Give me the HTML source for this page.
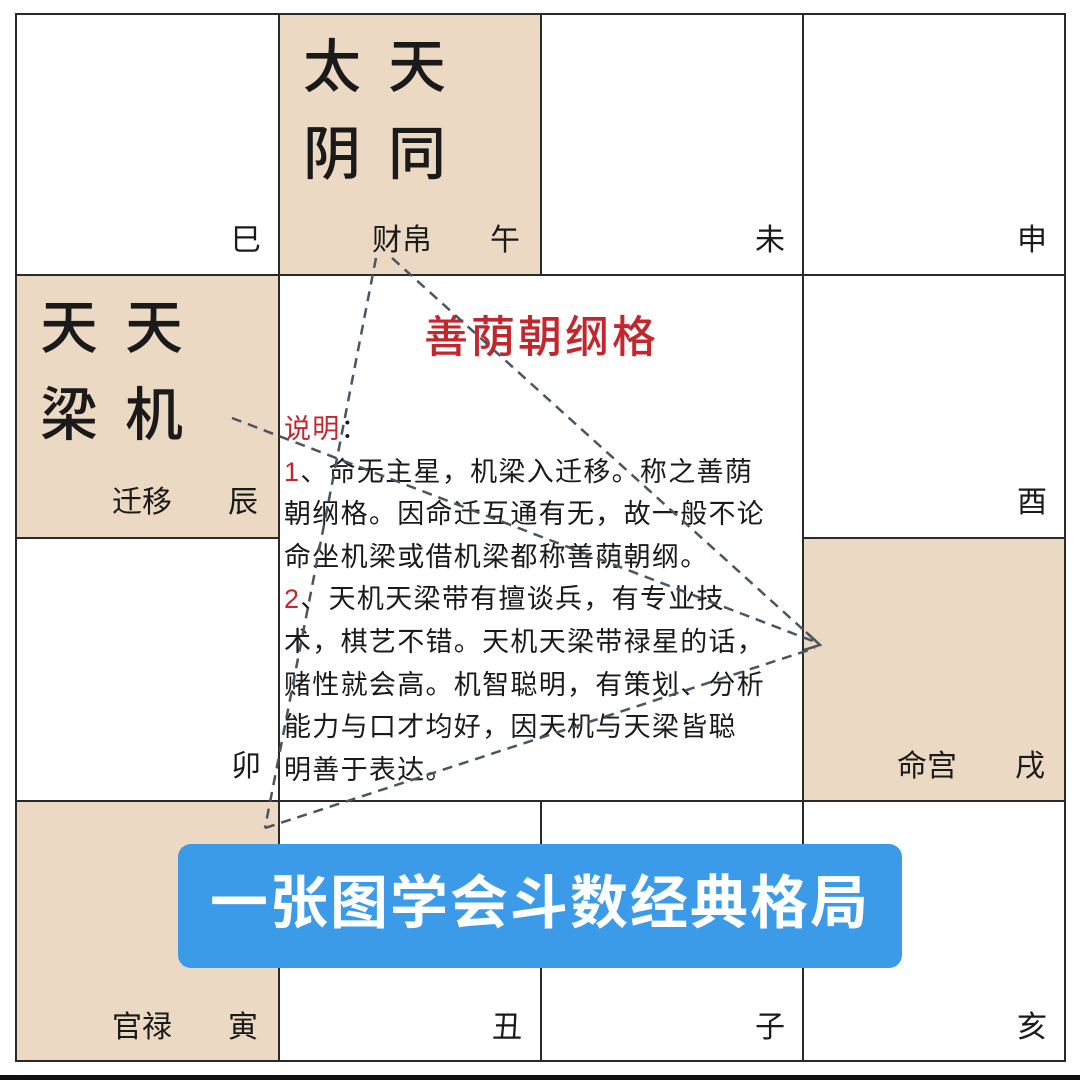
<!DOCTYPE html>
<html><head><meta charset="utf-8"><style>
body{margin:0;width:1080px;height:1080px;background:#fff;position:relative;overflow:hidden;font-family:"Liberation Sans","Noto Sans CJK SC",sans-serif;color:#1a1a1a}
.c{position:absolute;box-sizing:border-box;border:2px solid #2a2a2a}
.b{background:#ecd9c3}
.t{position:absolute;white-space:nowrap;line-height:1}
.big{font-size:58px;letter-spacing:27px;line-height:87px;font-weight:500}
.s{font-size:30px}
#txt{position:absolute;left:284px;top:408px;font-size:27px;letter-spacing:1.3px;line-height:42.6px;white-space:nowrap}
.r{color:#c2272d}
</style></head><body>
<div class="c" style="left:15px;top:13px;width:265px;height:263px"></div>
<div class="c b" style="left:278px;top:13px;width:264px;height:263px"></div>
<div class="c" style="left:540px;top:13px;width:264px;height:263px"></div>
<div class="c" style="left:802px;top:13px;width:264px;height:263px"></div>
<div class="c b" style="left:15px;top:274px;width:265px;height:265px"></div>
<div class="c" style="left:278px;top:274px;width:526px;height:528px"></div>
<div class="c" style="left:802px;top:274px;width:264px;height:265px"></div>
<div class="c" style="left:15px;top:537px;width:265px;height:265px"></div>
<div class="c b" style="left:802px;top:537px;width:264px;height:265px"></div>
<div class="c b" style="left:15px;top:800px;width:265px;height:262px"></div>
<div class="c" style="left:278px;top:800px;width:264px;height:262px"></div>
<div class="c" style="left:540px;top:800px;width:264px;height:262px"></div>
<div class="c" style="left:802px;top:800px;width:264px;height:262px"></div>
<div style="position:absolute;left:0;top:1075px;width:1080px;height:5px;background:#111"></div>

<div class="t big" style="left:303px;top:24px">太天<br>阴同</div>
<div class="t big" style="left:40px;top:285px">天天<br>梁机</div>

<div class="t s" style="left:231px;top:226px">巳</div>
<div class="t s" style="left:372px;top:226px">财帛</div>
<div class="t s" style="left:490px;top:226px">午</div>
<div class="t s" style="left:755px;top:226px">未</div>
<div class="t s" style="left:1017px;top:226px">申</div>
<div class="t s" style="left:112px;top:488px">迁移</div>
<div class="t s" style="left:228px;top:488px">辰</div>
<div class="t s" style="left:1017px;top:488px">酉</div>
<div class="t s" style="left:231px;top:752px">卯</div>
<div class="t s" style="left:897px;top:752px">命宫</div>
<div class="t s" style="left:1015px;top:752px">戌</div>
<div class="t s" style="left:112px;top:1013px">官禄</div>
<div class="t s" style="left:228px;top:1013px">寅</div>
<div class="t s" style="left:492px;top:1013px">丑</div>
<div class="t s" style="left:755px;top:1013px">子</div>
<div class="t s" style="left:1017px;top:1013px">亥</div>

<div class="t r" style="left:424px;top:316px;font-size:44px;letter-spacing:3px;font-weight:500">善荫朝纲格</div>
<div id="txt"><span class="r">说明</span>：<br><span class="r">1</span>、命无主星，机梁入迁移。称之善荫<br>朝纲格。因命迁互通有无，故一般不论<br>命坐机梁或借机梁都称善荫朝纲。<br><span class="r">2</span>、天机天梁带有擅谈兵，有专业技<br>术，棋艺不错。天机天梁带禄星的话，<br>赌性就会高。机智聪明，有策划、分析<br>能力与口才均好，因天机与天梁皆聪<br>明善于表达。</div>

<svg style="position:absolute;left:0;top:0" width="1080" height="1080">
<g stroke="#4a5563" stroke-width="2.5" stroke-dasharray="10,7" fill="none">
<path d="M376 258 L265 828"/>
<path d="M392 258 L818 643"/>
<path d="M232 418 L818 643"/>
<path d="M265 828 L815 648"/>
</g>
<path d="M806 632 L820 645 L804 650" stroke="#4a5563" stroke-width="2.5" fill="none"/>
</svg>

<div style="position:absolute;left:178px;top:844px;width:724px;height:124px;background:#3b9be9;border-radius:13px"></div>
<div class="t" style="left:178px;top:844px;width:724px;height:124px;line-height:120px;text-align:center;color:#fff;font-size:58px;font-weight:bold;letter-spacing:2px">一张图学会斗数经典格局</div>
</body></html>
